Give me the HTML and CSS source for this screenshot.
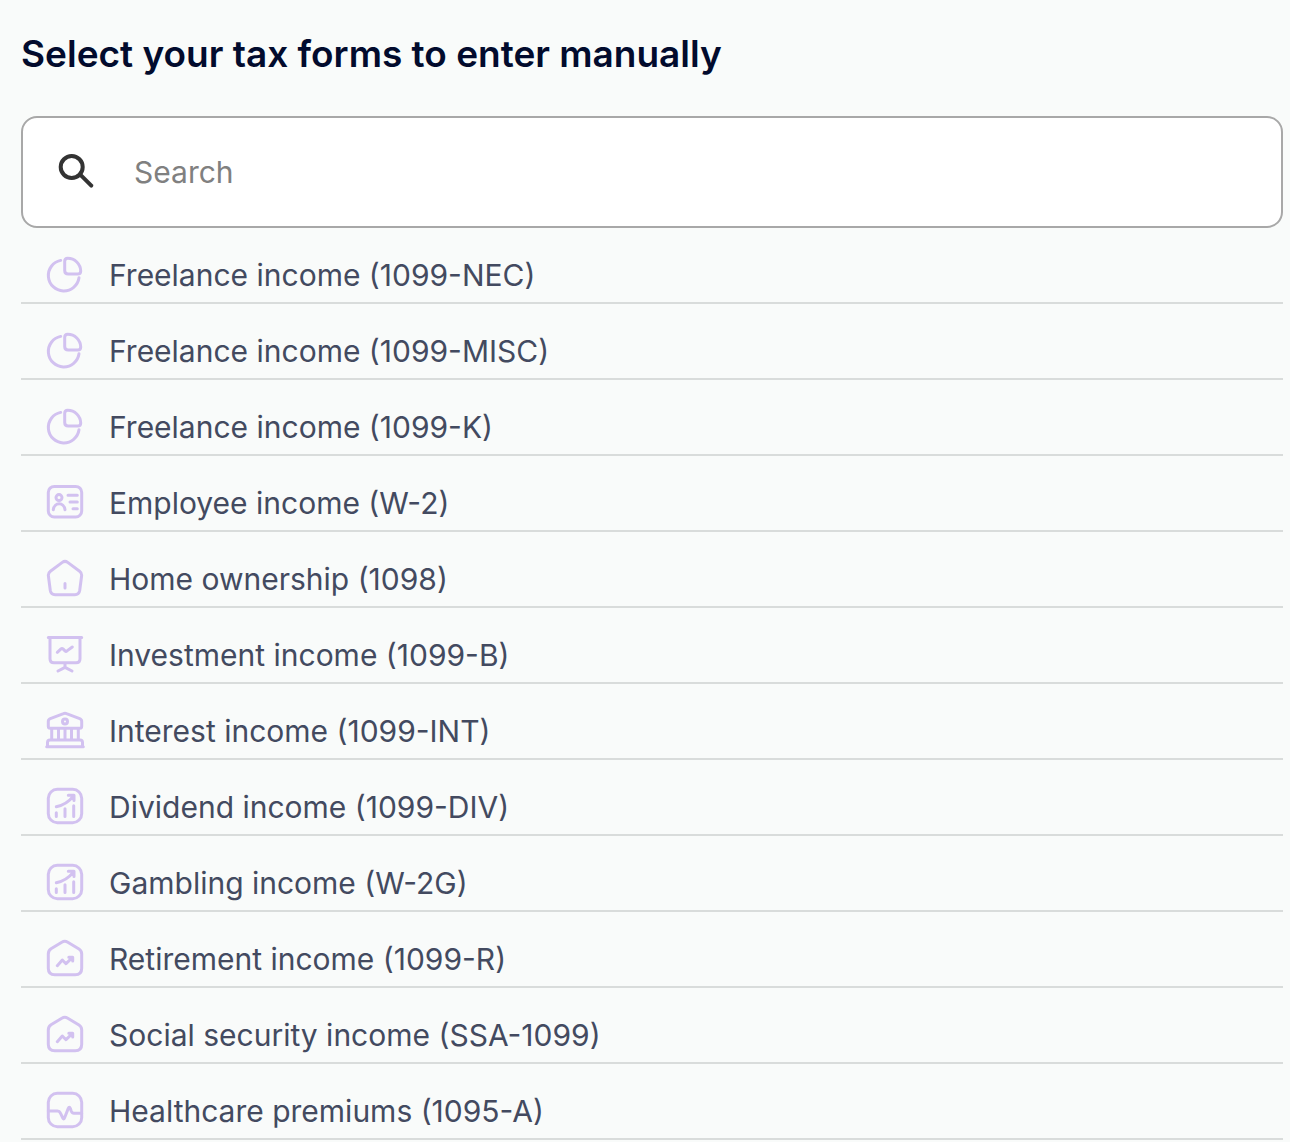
FILE: index.html
```html
<!DOCTYPE html>
<html lang="en">
<head>
<meta charset="utf-8">
<meta name="viewport" content="width=device-width, initial-scale=1">
<title>Select your tax forms</title>
<link rel="stylesheet" href="styles.css">
</head>
<body>
<svg class="sprite" aria-hidden="true">
  <symbol id="pie" viewBox="0 0 40 40">
    <path d="M15.7 5.4A15.4 15.4 0 1 0 34 22.7"/>
    <path d="M19.7 6.3Q19.7 3.3 22.7 3.3A13 13 0 0 1 35.7 16Q35.7 19 32.7 19H23.2Q19.7 19 19.7 15.5Z"/>
  </symbol>
  <symbol id="id-card" viewBox="0 0 40 40">
    <rect x="3.3" y="3.4" width="33.4" height="30.6" rx="6"/>
    <circle cx="14" cy="14.6" r="3"/>
    <path d="M8.3 26.7C9.3 18.9 19 18.9 20 26.7M23 12.3H32.3M25 19H32.3M28 25.7H32.3"/>
  </symbol>
  <symbol id="home" viewBox="0 0 40 40">
    <path d="M17.3 3.4Q20 1.4 22.7 3.4L34.6 12.2Q37 14 36.6 17L34.7 31.5Q34 35.7 29.8 35.7H10.2Q6 35.7 5.3 31.5L3.4 17Q3 14 5.4 12.2ZM20 24.4V29"/>
  </symbol>
  <symbol id="board" viewBox="0 0 40 40">
    <path d="M3.3 2.4H36.7M5 2.4V23.7Q5 27.7 9 27.7H31Q35 27.7 35 23.7V2.4M12.3 17.3L16 13.9Q17 13 18 13.9L20 15.9Q21 16.8 22 15.9L27.3 12M20 27.7V32.3M13 36L20 32.3L27 36"/>
  </symbol>
  <symbol id="bank" viewBox="0 0 40 40">
    <path d="M18.5 2.7Q20 2 21.5 2.7L34.7 7.6Q36.7 8.4 36.7 10.5V15.3Q36.7 17.3 34.7 17.3H5.3Q3.3 17.3 3.3 15.3V10.5Q3.3 8.4 5.3 7.6ZM6.7 17.3V29M13.5 17.3V29M20 17.3V29M26.5 17.3V29M33.3 17.3V29M2.5 35V31.5Q2.5 29 5 29H35Q37.5 29 37.5 31.5V35M1.7 35.7H38.3"/>
    <circle cx="20" cy="10.6" r="2.5"/>
  </symbol>
  <symbol id="growth" viewBox="0 0 40 40">
    <rect x="3.3" y="2.3" width="33.4" height="33.4" rx="9"/>
    <path d="M11.3 25.7V29.5M20 21.7V29.5M28.7 18.7V29.5M11.3 19.7Q22 17.5 28.7 8.6M23.3 8.3H29V13.5"/>
  </symbol>
  <symbol id="home-growth" viewBox="0 0 40 40">
    <path d="M16.8 3.2Q19.8 1.5 22.8 3.2L34 10Q36.7 11.7 36.7 15V29.2Q36.7 35.7 30.2 35.7H9.8Q3.3 35.7 3.3 29.2V15Q3.3 11.7 6 9.8ZM12.3 26.7L17.3 21L21 24.7L27.5 18.5M23.8 18.2H27.7V22"/>
  </symbol>
  <symbol id="pulse" viewBox="0 0 40 40">
    <rect x="3.3" y="2.3" width="33.4" height="33.4" rx="9"/>
    <path d="M3.3 20H12.5Q14.5 20 15.3 21.9L17.8 27Q18.8 29 19.6 26.8L23.2 17.6Q24.3 14.8 25.4 17.6L26.3 20.2Q27.1 22.3 29 22.3H36.7"/>
  </symbol>
</svg>

<main class="page">
  <h1 class="title">Select your tax forms to enter manually</h1>
  <label class="search">
    <svg class="search-icon" viewBox="0 0 40 40" aria-hidden="true">
      <circle cx="15.7" cy="15" r="11"/>
      <path d="M24 22.3L35.3 33.6"/>
    </svg>
    <input class="search-input" type="text" placeholder="Search" aria-label="Search">
  </label>
  <ul class="forms">
    <li class="form"><svg class="icon" aria-hidden="true"><use href="#pie"/></svg><span>Freelance income (1099-NEC)</span></li>
    <li class="form"><svg class="icon" aria-hidden="true"><use href="#pie"/></svg><span>Freelance income (1099-MISC)</span></li>
    <li class="form"><svg class="icon" aria-hidden="true"><use href="#pie"/></svg><span>Freelance income (1099-K)</span></li>
    <li class="form"><svg class="icon" aria-hidden="true"><use href="#id-card"/></svg><span>Employee income (W-2)</span></li>
    <li class="form"><svg class="icon" aria-hidden="true"><use href="#home"/></svg><span>Home ownership (1098)</span></li>
    <li class="form"><svg class="icon" aria-hidden="true"><use href="#board"/></svg><span>Investment income (1099-B)</span></li>
    <li class="form"><svg class="icon" aria-hidden="true"><use href="#bank"/></svg><span>Interest income (1099-INT)</span></li>
    <li class="form"><svg class="icon" aria-hidden="true"><use href="#growth"/></svg><span>Dividend income (1099-DIV)</span></li>
    <li class="form"><svg class="icon" aria-hidden="true"><use href="#growth"/></svg><span>Gambling income (W-2G)</span></li>
    <li class="form"><svg class="icon" aria-hidden="true"><use href="#home-growth"/></svg><span>Retirement income (1099-R)</span></li>
    <li class="form"><svg class="icon" aria-hidden="true"><use href="#home-growth"/></svg><span>Social security income (SSA-1099)</span></li>
    <li class="form"><svg class="icon" aria-hidden="true"><use href="#pulse"/></svg><span>Healthcare premiums (1095-A)</span></li>
  </ul>
</main>
</body>
</html>
```
FILE: styles.css
```css
* {
  box-sizing: border-box;
}

body {
  margin: 0;
  background: #f9fbfa;
  color: #434a60;
  font-family: Inter, "Liberation Sans", sans-serif;
  font-size: 30px;
}

.sprite {
  display: none;
}

.page {
  padding: 32px 7px 0 21px;
}

.title {
  margin: 0 0 40px;
  color: #020b2d;
  font-size: 37px;
  font-weight: 600;
  line-height: 44px;
}

.search {
  display: flex;
  align-items: center;
  gap: 38px;
  height: 112px;
  padding: 0 33px;
  border: 2px solid #a8a8a8;
  border-radius: 16px;
  background: #fff;
}

.search-icon {
  flex: none;
  width: 40px;
  height: 40px;
  fill: none;
  stroke: #333;
  stroke-width: 4;
  stroke-linecap: round;
}

.search-input {
  flex: 1;
  min-width: 0;
  padding: 0;
  border: 0;
  outline: 0;
  background: none;
  color: #434a60;
  font: inherit;
}

.search-input::placeholder {
  color: #808080;
  opacity: 1;
}

.forms {
  margin: 0;
  padding: 0;
  list-style: none;
}

.form {
  display: flex;
  align-items: center;
  gap: 24px;
  padding: 24px 24px 4px;
  border-bottom: 2px solid #d9dcdb;
  line-height: 46px;
}

.icon {
  flex: none;
  width: 40px;
  height: 40px;
  fill: none;
  stroke: #d2c1f0;
  stroke-width: 3;
  stroke-linecap: round;
  stroke-linejoin: round;
}
```
